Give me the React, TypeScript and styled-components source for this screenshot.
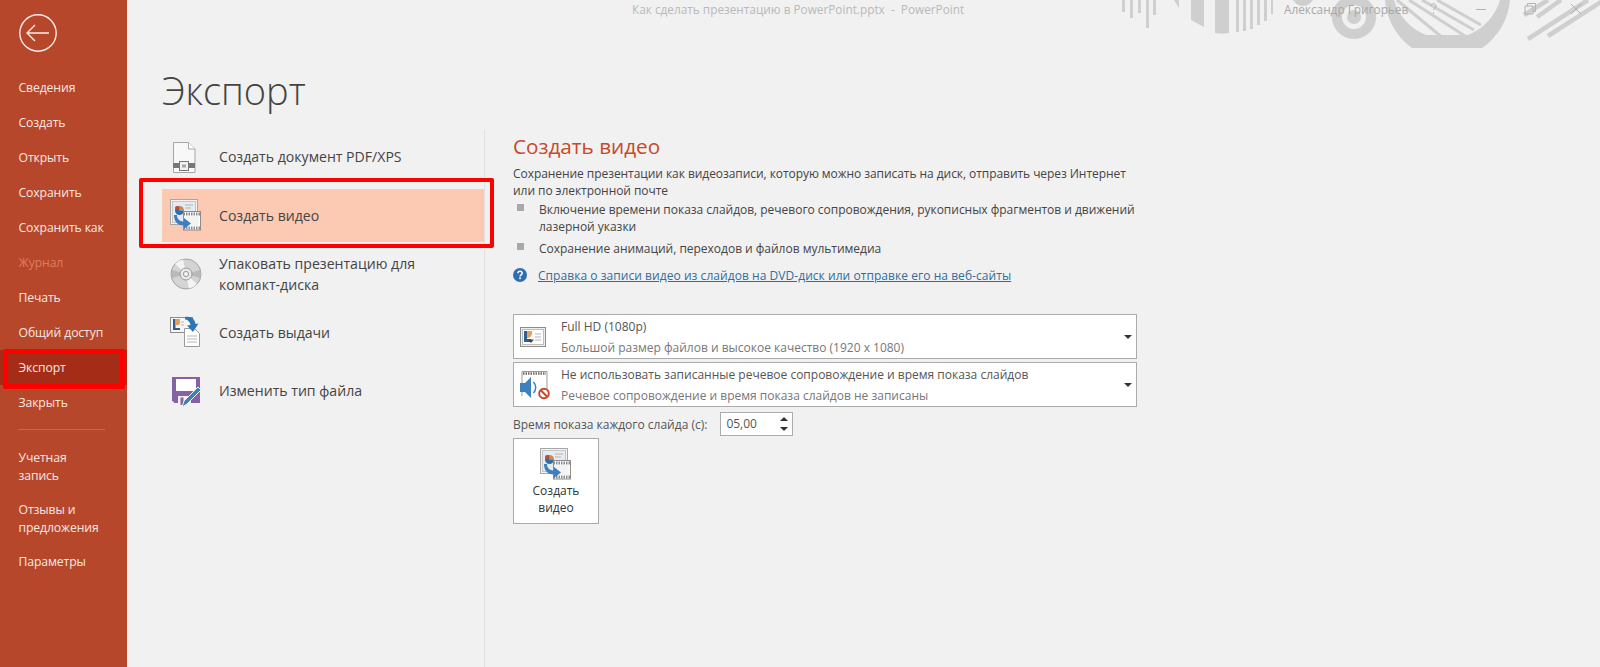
import React from 'react';
import styled, { createGlobalStyle } from 'styled-components';

const GlobalStyle = createGlobalStyle`
  html, body {
    margin: 0;
    padding: 0;
    height: 100%;
    background: #f1f1f1;
  }
  body {
    font-family: 'Open Sans', 'Noto Sans', 'Liberation Sans', sans-serif;
    overflow: hidden;
  }
`;

const Page = styled.div`
  display: flex;
  width: 1600px;
  height: 667px;
  overflow: hidden;
  background: #f1f1f1;
`;

const Sidebar = styled.nav`
  flex: 0 0 127px;
  display: flex;
  flex-direction: column;
  background: #b7472a;
  color: #f6e7e2;
`;

const BackButton = styled.div`
  height: 70px;
  padding: 14px 0 0 18px;
  box-sizing: border-box;
`;

const NavItem = styled.div<{ $active?: boolean; $disabled?: boolean }>`
  position: relative;
  display: flex;
  align-items: center;
  height: 35px;
  padding-left: 18.5px;
  font-size: 12.2px;
  letter-spacing: -0.1px;
  color: ${(p) => (p.$disabled ? '#dd7a62' : '#f6e7e2')};
  background: ${(p) => (p.$active ? '#a52d17' : 'transparent')};
  ${(p) =>
    p.$active &&
    `
    &::after {
      content: '';
      position: absolute;
      left: 3px;
      right: 2px;
      top: -1px;
      bottom: -4px;
      border: 5px solid #ff0000;
      border-radius: 2px;
    }
  `}
`;

const NavDivider = styled.div`
  height: 1px;
  margin: 9px 22px 19px 18px;
  background: #c9654c;
`;

const NavBlock = styled.div`
  padding: 0 0 0 18.5px;
  margin-bottom: 17px;
  font-size: 12.2px;
  line-height: 17.5px;
  letter-spacing: -0.1px;
`;

const Main = styled.main`
  flex: 1;
  display: flex;
  flex-direction: column;
  min-width: 0;
`;

const TitleBar = styled.header`
  position: relative;
  flex: 0 0 48px;
  height: 48px;
  color: #b9b9b9;
  font-size: 11.8px;
`;

const Pattern = styled.svg`
  position: absolute;
  top: 0;
  right: 0;
`;

const DocTitle = styled.div`
  position: absolute;
  top: 1px;
  left: 505px;
  white-space: pre;
`;

const UserName = styled.div`
  position: absolute;
  top: 1px;
  left: 1157px;
  color: #a8a8a8;
`;

const PageTitle = styled.h1`
  margin: 0;
  height: 82px;
  padding-left: 35px;
  font-size: 38px;
  font-weight: 300;
  line-height: 84px;
  color: #444;
`;

const Columns = styled.div`
  flex: 1;
  display: flex;
  min-height: 0;
`;

const ExportList = styled.div`
  flex: 0 0 322px;
  margin-left: 35px;
  border-right: 1px solid #e1e1e1;
  display: flex;
  flex-direction: column;
  gap: 5.5px;
`;

const ExportItem = styled.div<{ $active?: boolean }>`
  position: relative;
  display: flex;
  align-items: center;
  gap: 17px;
  height: 53px;
  padding-left: 8px;
  font-size: 14.1px;
  line-height: 21px;
  color: #444;
  background: ${(p) => (p.$active ? '#fccab3' : 'transparent')};
  ${(p) =>
    p.$active &&
    `
    &::after {
      content: '';
      position: absolute;
      left: -23px;
      right: -10px;
      top: -11px;
      bottom: -6px;
      border: 4px solid #ff0000;
      border-radius: 2px;
    }
  `}
`;

const ItemIcon = styled.span`
  flex: 0 0 32px;
  display: flex;
  justify-content: center;
`;

const Details = styled.section`
  flex: 0 0 624px;
  margin-left: 28px;
  display: flex;
  flex-direction: column;
`;

const DetailsTitle = styled.h2`
  margin: 0;
  height: 31px;
  font-size: 20.7px;
  font-weight: 400;
  line-height: 32px;
  color: #c6492b;
`;

const Description = styled.p`
  margin: 0;
  padding-top: 4px;
  font-size: 12px;
  line-height: 17px;
  letter-spacing: -0.06px;
  color: #444;
`;

const BulletList = styled.ul`
  list-style: none;
  margin: 2px 0 0;
  padding: 0;
  display: flex;
  flex-direction: column;
  gap: 5px;
`;

const Bullet = styled.li`
  position: relative;
  padding-left: 26px;
  font-size: 12px;
  line-height: 17px;
  letter-spacing: -0.02px;
  color: #444;
  &::before {
    content: '';
    position: absolute;
    left: 4px;
    top: 3px;
    width: 7px;
    height: 7px;
    background: #a9a9a9;
  }
`;

const HelpRow = styled.div`
  display: flex;
  align-items: center;
  gap: 11px;
  margin-top: 9px;
  height: 18px;
  font-size: 12px;
`;

const HelpLink = styled.a`
  color: #2f6d9e;
  letter-spacing: 0.05px;
  text-decoration: underline;
`;

const Select = styled.div<{ $first?: boolean }>`
  position: relative;
  display: flex;
  align-items: center;
  gap: 9px;
  box-sizing: border-box;
  height: 45px;
  margin-top: ${(p) => (p.$first ? '30px' : '3px')};
  padding-left: 6px;
  background: #fff;
  border: 1px solid #ababab;
  font-size: 12px;
  line-height: 21px;
`;

const SelectIcon = styled.span`
  flex: 0 0 32px;
  display: flex;
`;

const SelectMain = styled.div`
  color: #555;
`;

const SelectSub = styled.div`
  color: #777;
`;

const Caret = styled.span`
  position: absolute;
  right: 4px;
  top: 20px;
  width: 0;
  height: 0;
  border-left: 4px solid transparent;
  border-right: 4px solid transparent;
  border-top: 4px solid #333;
`;

const TimeRow = styled.div`
  display: flex;
  align-items: center;
  gap: 13px;
  margin-top: 5px;
  font-size: 12px;
  color: #555;
`;

const Spinner = styled.div`
  position: relative;
  box-sizing: border-box;
  width: 73px;
  height: 24px;
  padding-left: 5px;
  background: #fff;
  border: 1px solid #ababab;
  line-height: 22px;
`;

const SpinUp = styled.span`
  position: absolute;
  right: 4px;
  top: 4px;
  width: 0;
  height: 0;
  border-left: 4px solid transparent;
  border-right: 4px solid transparent;
  border-bottom: 4px solid #333;
`;

const SpinDown = styled.span`
  position: absolute;
  right: 4px;
  bottom: 4px;
  width: 0;
  height: 0;
  border-left: 4px solid transparent;
  border-right: 4px solid transparent;
  border-top: 4px solid #333;
`;

const CreateButton = styled.button`
  display: flex;
  flex-direction: column;
  align-items: center;
  box-sizing: border-box;
  width: 86px;
  height: 86px;
  margin-top: 2px;
  padding: 9px 0 0;
  background: #fff;
  border: 1px solid #ababab;
  font-family: inherit;
  font-size: 12px;
  line-height: 17px;
  color: #333;
`;

const ButtonLabel = styled.span`
  margin-top: 2px;
`;

const Back = () => (
  <svg width="40" height="40" viewBox="0 0 40 40" fill="none" stroke="#f8ebe6" strokeWidth="1.4">
    <circle cx="20" cy="19" r="18.2" />
    <path d="M9 19h22M17 11l-8 8 8 8" />
  </svg>
);

const DocIcon = () => (
  <svg width="32" height="32" viewBox="0 0 32 32">
    <path d="M3.5 1.5h15l6.5 6.5v23.5H3.5z" fill="#f8f8f8" stroke="#a6a6a6" />
    <path d="M18.5 1.5V8H25" fill="#fff" stroke="#a6a6a6" />
    <rect x="3" y="22" width="22" height="5" fill="#777" />
    <rect x="9.5" y="20.5" width="9" height="9" fill="#f1f1f1" stroke="#777" />
    <rect x="12" y="23.5" width="4" height="3" fill="#a6a6a6" />
  </svg>
);

const VideoIcon = () => (
  <svg width="32" height="32" viewBox="0 0 32 32">
    <rect x="0.5" y="0.5" width="27" height="25" fill="#f4f4f4" stroke="#a6a6a6" />
    <rect x="2.5" y="2.5" width="23" height="21" fill="#e6ebf2" stroke="#c4c4c4" />
    <path d="M9.5 7a4.5 4.5 0 0 1 4.5 4.5H9.5z" fill="#d9853b" />
    <path d="M9.5 7v4.5H14A4.5 4.5 0 1 1 9.5 7z" fill="#2f6fa8" />
    <circle cx="7" cy="9" r="2" fill="#c6492b" />
    <path d="M15 6h8M15 9h6" stroke="#b5b5b5" />
    <rect x="13.5" y="12.5" width="17" height="18.5" fill="#fff" stroke="#8c8c8c" />
    <path d="M13.5 15h17M13.5 29h17" stroke="#8c8c8c" strokeWidth="3" strokeDasharray="1.5 1" />
    <rect x="15" y="17" width="14" height="10" fill="#f4f4f4" />
    <path d="M7 16c0 4 2.500 6.500 7 6.500V19l7 5.500-7 5.500v-3.500c-7 0-10-4.500-10-10.500z" fill="#3d80c0" />
  </svg>
);

const DiscIcon = () => (
  <svg width="32" height="32" viewBox="0 0 32 32">
    <circle cx="16" cy="16" r="15" fill="#d4d4d4" stroke="#a3a3a3" />
    <path d="M16 16L5 6a15 15 0 0 1 8-4.500zM16 16l11 10a15 15 0 0 1-8 4.500z" fill="#f3f3f3" />
    <path d="M16 16L30 12a15 15 0 0 1 0 8zM16 16L2 20a15 15 0 0 1 0-8z" fill="#b9b9b9" />
    <circle cx="16" cy="16" r="6" fill="#e9e9e9" stroke="#9a9a9a" />
    <circle cx="16" cy="16" r="2.600" fill="#f1f1f1" stroke="#9a9a9a" />
  </svg>
);

const HandoutIcon = () => (
  <svg width="32" height="32" viewBox="0 0 32 32">
    <rect x="0.5" y="1.500" width="22" height="15" fill="#f6f6f6" stroke="#8c8c8c" />
    <path d="M3 3h2.500v9H10v2H3z" fill="#2f5f92" />
    <path d="M5.500 3H10v5a4 4 0 0 1-4.500 1z" fill="#e0a458" />
    <path d="M11 6h3M11 9h3" stroke="#b5b5b5" />
    <path d="M14.500 12.500h10l5 5v13h-15z" fill="#fff" stroke="#9a9a9a" />
    <path d="M17 20h10M17 23h10M17 26h10" stroke="#b5b5b5" />
    <path d="M15 1c6-1.500 10 2 10.500 7l3-.5L23 16l-6-6.500 3.500-.5C20 6 18 3.500 15 3.500z" fill="#2f74b5" />
  </svg>
);

const SaveAsIcon = () => (
  <svg width="32" height="32" viewBox="0 0 32 32">
    <path d="M2 2h28v26H4.500L2 25.500z" fill="#8661a8" />
    <rect x="6" y="4" width="20" height="12" fill="#fff" />
    <rect x="8" y="21" width="13" height="9" fill="#f1f1f1" />
    <rect x="10.500" y="22.500" width="3" height="7.500" fill="#8661a8" />
    <path d="M28 12l3 3-14 14-5 3 2-6z" fill="#3d80c0" stroke="#f1f1f1" />
  </svg>
);

const ResolutionIcon = () => (
  <svg width="26" height="20" viewBox="0 0 26 20">
    <rect x="0.500" y="0.500" width="25" height="19" fill="#efefef" stroke="#8c8c8c" />
    <rect x="2.500" y="2.500" width="21" height="15" fill="#fff" stroke="#bdbdbd" />
    <path d="M4 4h3v8h4v3H4z" fill="#2f5f92" />
    <path d="M7 4h5c1 3.500-1.500 7-5 7z" fill="#e0a458" />
    <path d="M15 7h6M15 10h6M15 13h6" stroke="#b5b5b5" />
    <path d="M8 12.500h6L11 16z" fill="#444" />
  </svg>
);

const NarrationIcon = () => (
  <svg width="32" height="30" viewBox="0 0 32 30">
    <path d="M2 26V1.500h25V22" fill="#fff" stroke="#9a9a9a" />
    <path d="M3 3.500h23" stroke="#6f6f6f" strokeWidth="2.500" strokeDasharray="1.500 1" />
    <path d="M0 13h5l6-6v21l-6-6H0z" fill="#3d80c0" />
    <path d="M13.500 12a8 8 0 0 1 0 11" fill="none" stroke="#3d80c0" strokeWidth="1.500" />
    <circle cx="24" cy="23.500" r="4.800" fill="#fff" stroke="#c6492b" strokeWidth="2" />
    <path d="M20.800 20.300l6.400 6.400" stroke="#c6492b" strokeWidth="2" />
  </svg>
);

const HelpIcon = () => (
  <svg width="14" height="14" viewBox="0 0 14 14">
    <circle cx="7" cy="7" r="7" fill="#2f6fb0" />
    <path d="M4.800 5.300C4.900 3.900 5.800 3.200 7 3.200c1.300 0 2.200.8 2.200 1.900 0 1.800-2.100 1.600-2.100 3.300" fill="none" stroke="#fff" strokeWidth="1.500" />
    <rect x="6.200" y="9.400" width="1.700" height="1.700" fill="#fff" />
  </svg>
);

const TitlePattern = () => (
  <Pattern width="520" height="48" viewBox="1080 0 520 48" fill="#cfcfcf">
    <path d="M1122 0h3v12h-3zM1130 0h3v18h-3zM1138 0h3v13h-3zM1146 0h3v28h-3zM1153 0h3v15h-3z" />
    <path d="M1174 0l5 8V0zM1191 0v20l13 7V0zM1215 0h14v33q-7 1-14 0zM1236 0h3v32h-3zM1243 0h3v31h-3zM1250 0h3v29h-3zM1257 0h3v25h-3zM1264 0h3v21h-3zM1271 0h2v14h-2z" />
    <path d="M1293 0h20q-4 6-10 6t-10-6z" />
    <path fillRule="evenodd" d="M1354-5a22 22 0 1 0 .01 0zM1354 5a12 12 0 1 1-.01 0z" />
    <circle cx="1354" cy="17" r="7" />
    <path fillRule="evenodd" d="M1385 0a65 65 0 0 0 27 48h70a65 65 0 0 0 28-48zM1394 0h106a54 54 0 0 1-32 35h-42a54 54 0 0 1-32-35z" />
    <g stroke="#cfcfcf" strokeWidth="3" fill="none">
      <path d="M1397 0l46 38M1409 0l56 36M1422 0l52 30M1437 0l44 25" />
    </g>
    <g stroke="#cfcfcf" strokeWidth="4.500" fill="none">
      <path d="M1524 15l24-15M1537 17l24-17M1528 39l60-39M1548 36l56-36" />
    </g>
    <g stroke="#b2b2b2" fill="none">
      <path d="M1476 9.500h10M1525 6h8v8h-8zM1527.500 6V3.500h8v8H1533M1571 4l10 10M1581 4l-10 10" />
      <path d="M1431 6c0-3 5-3 5 0 0 2-2.500 2-2.500 4M1433.500 12v1.500" />
    </g>
  </Pattern>
);

const navTop = ['Сведения', 'Создать', 'Открыть', 'Сохранить', 'Сохранить как'];

export default function App() {
  return (
    <Page>
      <GlobalStyle />
      <Sidebar>
        <BackButton>
          <Back />
        </BackButton>
        {navTop.map((label) => (
          <NavItem key={label}>{label}</NavItem>
        ))}
        <NavItem $disabled>Журнал</NavItem>
        <NavItem>Печать</NavItem>
        <NavItem>Общий доступ</NavItem>
        <NavItem $active>Экспорт</NavItem>
        <NavItem>Закрыть</NavItem>
        <NavDivider />
        <NavBlock>Учетная<br />запись</NavBlock>
        <NavBlock>Отзывы и<br />предложения</NavBlock>
        <NavBlock>Параметры</NavBlock>
      </Sidebar>
      <Main>
        <TitleBar>
          <TitlePattern />
          <DocTitle>Как сделать презентацию в PowerPoint.pptx  -  PowerPoint</DocTitle>
          <UserName>Александр Григорьев</UserName>
        </TitleBar>
        <PageTitle>Экспорт</PageTitle>
        <Columns>
          <ExportList>
            <ExportItem>
              <ItemIcon><DocIcon /></ItemIcon>
              Создать документ PDF/XPS
            </ExportItem>
            <ExportItem $active>
              <ItemIcon><VideoIcon /></ItemIcon>
              Создать видео
            </ExportItem>
            <ExportItem>
              <ItemIcon><DiscIcon /></ItemIcon>
              <span>Упаковать презентацию для<br />компакт-диска</span>
            </ExportItem>
            <ExportItem>
              <ItemIcon><HandoutIcon /></ItemIcon>
              Создать выдачи
            </ExportItem>
            <ExportItem>
              <ItemIcon><SaveAsIcon /></ItemIcon>
              Изменить тип файла
            </ExportItem>
          </ExportList>
          <Details>
            <DetailsTitle>Создать видео</DetailsTitle>
            <Description>
              Сохранение презентации как видеозаписи, которую можно записать на диск, отправить через Интернет<br />
              или по электронной почте
            </Description>
            <BulletList>
              <Bullet>
                Включение времени показа слайдов, речевого сопровождения, рукописных фрагментов и движений<br />
                лазерной указки
              </Bullet>
              <Bullet>Сохранение анимаций, переходов и файлов мультимедиа</Bullet>
            </BulletList>
            <HelpRow>
              <HelpIcon />
              <HelpLink>Справка о записи видео из слайдов на DVD-диск или отправке его на веб-сайты</HelpLink>
            </HelpRow>
            <Select $first>
              <SelectIcon><ResolutionIcon /></SelectIcon>
              <div>
                <SelectMain>Full HD (1080p)</SelectMain>
                <SelectSub>Большой размер файлов и высокое качество (1920 x 1080)</SelectSub>
              </div>
              <Caret />
            </Select>
            <Select>
              <SelectIcon><NarrationIcon /></SelectIcon>
              <div>
                <SelectMain>Не использовать записанные речевое сопровождение и время показа слайдов</SelectMain>
                <SelectSub>Речевое сопровождение и время показа слайдов не записаны</SelectSub>
              </div>
              <Caret />
            </Select>
            <TimeRow>
              Время показа каждого слайда (с):
              <Spinner>
                05,00
                <SpinUp />
                <SpinDown />
              </Spinner>
            </TimeRow>
            <CreateButton>
              <VideoIcon />
              <ButtonLabel>Создать<br />видео</ButtonLabel>
            </CreateButton>
          </Details>
        </Columns>
      </Main>
    </Page>
  );
}
